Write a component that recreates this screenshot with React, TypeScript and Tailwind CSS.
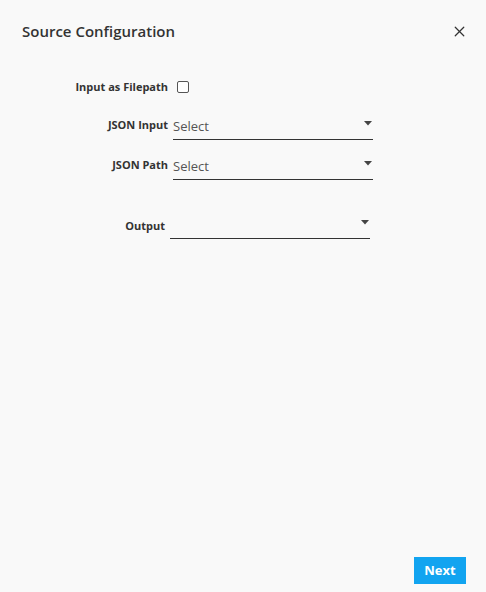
import { X } from "lucide-react";

function Caret() {
  return (
    <svg width="8" height="5" viewBox="0 0 8 5" className="shrink-0">
      <path d="M0 0h8L4 4.5z" fill="#444" />
    </svg>
  );
}

function SelectField({ placeholder, compact }: { placeholder?: string; compact?: boolean }) {
  return (
    <section
      className={`flex w-[200px] items-end justify-between border-b border-[#333] ${
        compact ? "h-[24px] pb-[4px]" : "h-[26px] pb-[6px]"
      }`}
    >
      <span className="text-[13px] leading-none text-[#555]">{placeholder ?? ""}</span>
      <span className={`mr-[1px] ${compact ? "mb-[9px]" : "mb-[7px]"}`}>
        <Caret />
      </span>
    </section>
  );
}

export default function App() {
  return (
    <main
      className="flex h-[592px] w-[486px] flex-col bg-[#f9f9f9] text-[#333]"
      style={{ fontFamily: '"Open Sans", "Noto Sans", sans-serif' }}
    >
      <header className="flex items-center justify-between pl-[22px] pr-[18px] pt-[20px]">
        <h1 className="text-[15px] font-semibold text-[#333]">Source Configuration</h1>
        <button className="text-[#333]">
          <X className="h-[17px] w-[17px]" strokeWidth={1.75} />
        </button>
      </header>

      <section className="mt-[36px] flex flex-col">
        <section className="flex items-center">
          <label className="w-[168px] text-right text-[11px] font-bold">Input as Filepath</label>
          <span className="ml-[9px] h-[12px] w-[12px] rounded-[2px] border border-[#555] bg-white" />
        </section>

        <section className="mt-[19px] flex items-end">
          <label className="w-[168px] pb-[7px] text-right text-[11px] font-bold">JSON Input</label>
          <span className="ml-[5px]">
            <SelectField placeholder="Select" />
          </span>
        </section>

        <section className="mt-[14px] flex items-end">
          <label className="w-[168px] pb-[7px] text-right text-[11px] font-bold">JSON Path</label>
          <span className="ml-[5px]">
            <SelectField placeholder="Select" />
          </span>
        </section>

        <section className="mt-[35px] flex items-end">
          <label className="w-[165px] pb-[5px] text-right text-[11px] font-bold">Output</label>
          <span className="ml-[5px]">
            <SelectField compact />
          </span>
        </section>
      </section>

      <footer className="mt-auto flex justify-end pb-[8px] pr-[20px]">
        <button className="h-[27px] w-[52px] bg-[#12a4f0] text-[13px] font-bold text-white">Next</button>
      </footer>
    </main>
  );
}
